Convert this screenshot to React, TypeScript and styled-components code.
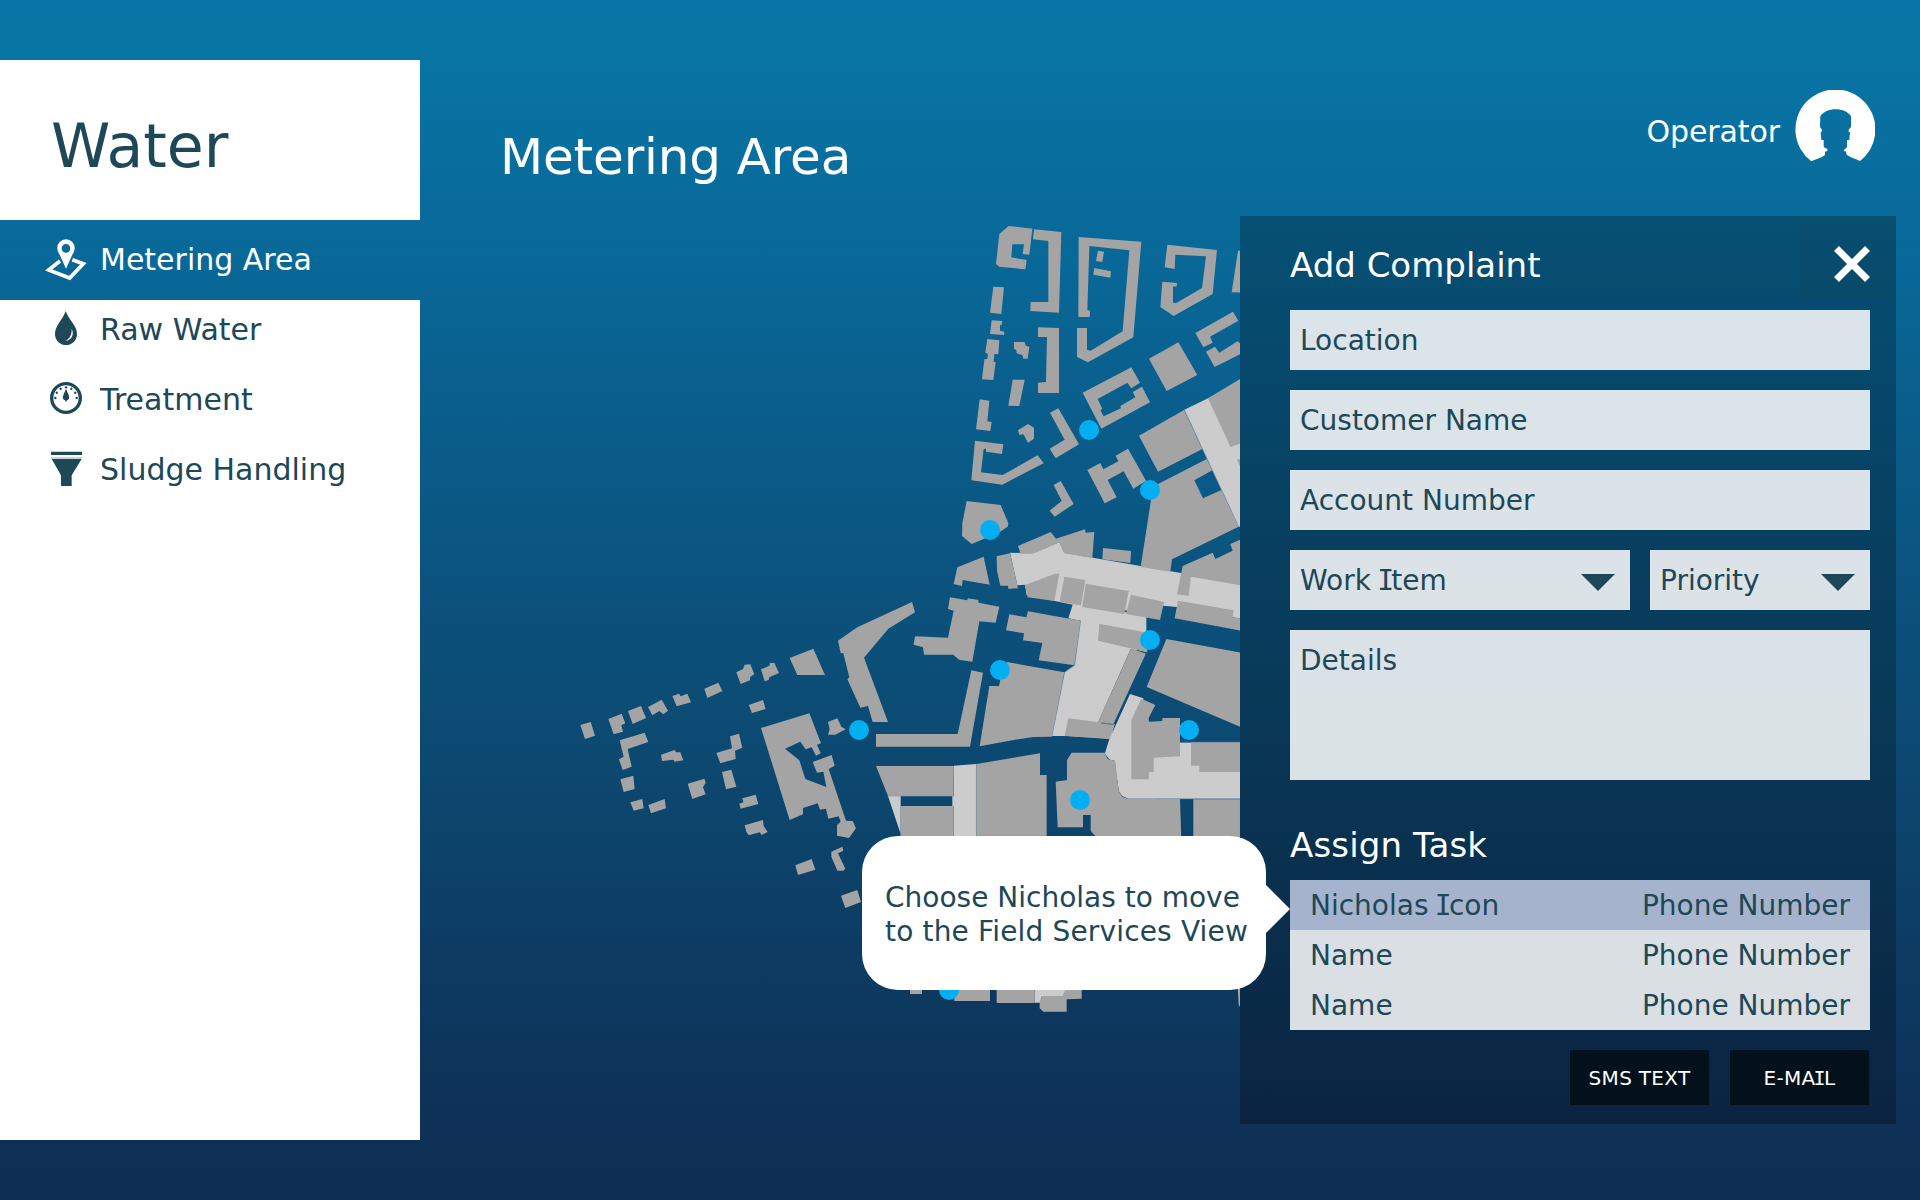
import React from "react";
import styled, { createGlobalStyle, css } from "styled-components";

const ink = "#1e4757";

const GlobalStyle = createGlobalStyle`
  * { box-sizing: border-box; }
  body { margin: 0; font-family: Verdana, "DejaVu Sans", sans-serif; }
  h1, h2, ul, p { margin: 0; padding: 0; font-weight: 400; }
`;

const Screen = styled.div`
  position: relative;
  display: flex;
  width: 1920px;
  height: 1200px;
  padding: 60px 0;
  overflow: hidden;
  color: #fff;
  background: linear-gradient(180deg, #0874a5 0, #0874a4 60px, #086a9a 230px, #0b5581 545px, #0c4870 770px, #0e3157 1110px, #0e2f53 1200px);
`;

const Sidebar = styled.aside`
  display: flex;
  flex-direction: column;
  width: 420px;
  height: 1080px;
  color: ${ink};
`;

const Brand = styled.div`
  display: flex;
  align-items: center;
  height: 160px;
  padding: 12px 0 0 51px;
  background: #fff;
  font-size: 60px;
`;

const NavItem = styled.div<{ $active?: boolean }>`
  display: flex;
  align-items: center;
  gap: 9px;
  height: 60px;
  padding-left: 41px;
  font-size: 30px;
  white-space: nowrap;
  ${(p) => p.$active && css`height: 80px; color: #fff;`}
`;

const NavLabel = styled.span`
  padding-bottom: 2px;
`;

const NavList = styled.nav`
  display: flex;
  flex: 1;
  flex-direction: column;
  gap: 10px;
  background: #fff;
`;

const NavIcon = styled.svg`
  width: 50px;
  height: 50px;
  flex: none;
`;

const Main = styled.main`
  display: flex;
  flex-direction: column;
  width: 1500px;
`;

const Header = styled.header`
  display: flex;
  justify-content: space-between;
  align-items: flex-start;
  height: 156px;
  padding: 30px 45px 0 80px;
`;

const Title = styled.h1`
  padding-top: 37px;
  font-size: 50px;
  line-height: 60px;
  letter-spacing: -0.15px;
`;

const User = styled.div`
  display: flex;
  align-items: center;
  gap: 15px;
  font-size: 30px;
`;

const UserName = styled.span`
  padding-top: 2px;
  letter-spacing: -0.1px;
`;

const Avatar = styled.svg`
  width: 80px;
  height: 80px;
`;

const Content = styled.div`
  display: flex;
  height: 908px;
`;

const MapCanvas = styled.svg`
  display: block;
  width: 820px;
  height: 908px;
  flex: none;
`;

const Panel = styled.section`
  display: flex;
  flex-direction: column;
  width: 656px;
  height: 908px;
  padding: 4px 0 0 50px;
  background: rgba(0, 0, 0, 0.25);
`;

const PanelHead = styled.div`
  display: flex;
  justify-content: space-between;
  align-items: center;
  height: 80px;
  margin-bottom: 10px;
`;

const PanelTitle = styled.h2`
  font-size: 34px;
  line-height: 44px;
  padding-top: 10px;
`;

const Close = styled.div`
  display: flex;
  justify-content: center;
  align-items: center;
  width: 96px;
  height: 80px;
  padding: 7px 0 0 8px;
  background: rgba(50, 50, 30, 0.06);
`;

const Form = styled.div`
  display: flex;
  flex-direction: column;
  gap: 20px;
  width: 580px;
`;

const FieldRow = styled.div`
  display: grid;
  grid-template-columns: 340px 220px;
  gap: 20px;
`;

const Field = styled.div<{ $tall?: boolean }>`
  display: flex;
  justify-content: space-between;
  align-items: flex-start;
  height: ${(p) => (p.$tall ? 150 : 60)}px;
  padding: 0 15px 0 10px;
  color: ${ink};
  background: rgba(255, 255, 255, 0.855);
  font-size: 28px;
  line-height: 62px;
`;

const Arrow = styled.span`
  margin-top: 24px;
  border: 17px solid transparent;
  border-top-color: ${ink};
  border-bottom-width: 0;
`;

const AssignTitle = styled.h2`
  margin: 43px 0 13px;
  font-size: 34px;
  line-height: 44px;
  letter-spacing: 0.15px;
`;

const Person = styled.div<{ $selected?: boolean }>`
  display: flex;
  justify-content: space-between;
  width: 580px;
  height: 50px;
  padding: 0 20px;
  color: ${ink};
  background: ${(p) => (p.$selected ? "#a5b4cc" : "#dadfe3")};
  font-size: 28px;
  line-height: 52px;
`;

const Actions = styled.div`
  display: flex;
  justify-content: flex-end;
  gap: 21px;
  width: 580px;
  margin-top: 20px;
  padding-right: 1px;
`;

const Action = styled.div`
  width: 139px;
  height: 55px;
  background: #03111d;
  font-size: 20px;
  line-height: 56px;
  letter-spacing: 0.3px;
  text-align: center;
`;

/* Capital I with bars, to tell it apart from a lowercase l. */
const BarI = styled.span`
  margin: 0 -0.095em;
  font-family: "DejaVu Sans Mono", monospace;
  line-height: 1;
`;

const Hint = styled.div`
  position: absolute;
  left: 861.5px;
  top: 836px;
  width: 404px;
  height: 153.5px;
  padding: 45px 0 0 23.5px;
  border-radius: 36px;
  background: #fff;
  color: ${ink};
  font-size: 28px;
  line-height: 34px;
  white-space: nowrap;

  &::after {
    content: "";
    position: absolute;
    left: 100%;
    top: 48px;
    margin-left: -1px;
    border: 25px solid transparent;
    border-left-color: #fff;
    border-right-width: 0;
  }
`;

const HintLine = styled.p<{ $spacing: number }>`
  letter-spacing: ${(p) => p.$spacing}px;
`;

type District = { at: [number, number]; shapes: string[] };

const streets: District[] = [
  { at: [1100, 340], shapes: ["253,209 324,175 420,130 420,560 416,560"] },
  {
    at: [930, 480],
    shapes: [
      "240,218 310,220 388,186 403,218 752,279 932,310 932,416 740,381 700,377 690,400 455,380 372,362 290,345 285,314 262,316",
      "428,374 649,405 649,515 602,508 505,725 553,735 542,776 415,768 366,768 404,577 434,556 452,422 415,415",
      "600,642 640,655 640,900 562,900 555,842 540,838 525,820 537,780",
    ],
  },
  {
    at: [840, 720],
    shapes: ["793,98 940,98 1020,68 1200,68 1200,236 865,236 846,228 836,212 825,122 808,118", "584,800 720,800 670,830 605,830 600,848 584,848"],
  },
  { at: [820, 560], shapes: ["401,617 469,612 469,840 401,840", "397,708 402,708 402,738 397,738", "204,708 242,708 242,840 248,840"] },
];

const blocks: District[] = [
  {
    at: [940, 210],
    shapes: [
      "206,48 277,56 268,134 248,132 252,103 217,103 214,142 260,150 256,178 178,170 168,162 178,72",
      "282,58 364,66 357,308 271,303 272,276 325,276 325,93 279,88",
      "160,230 192,232 184,312 150,308",
      "155,331 187,333 185,345 180,346 180,362 193,365 192,375 150,372",
      "142,387 178,391 175,433 163,432 161,455 167,457 160,510 126,508 133,448 142,446 144,432 136,428",
      "222,396 254,396 257,407 268,410 263,446 250,446 248,436 230,430 229,420 222,416",
      "218,509 254,509 238,588 205,587",
      "294,352 357,354 357,549 294,549 294,518 318,516 321,381 294,381",
      "119,568 148,572 142,634 155,636 151,663 108,658",
      "264,642 282,653 282,686 264,698 250,673 238,675 234,661",
      "105,692 190,703 186,732 138,725 138,716 131,716 123,787 188,795 293,736 311,760 187,824 94,811",
      "416,81 604,95 580,382 444,457 411,441 411,354 441,354 441,419 452,422 548,364 568,121 448,108 442,300 450,302 449,321 415,321",
      "474,122 492,125 487,156 468,153",
      "463,174 513,184 511,203 460,194",
      "682,104 831,120 818,252 701,318 661,291 667,215 711,219 710,229 699,230 699,278 709,279 786,234 798,139 706,134 704,177 674,172",
      "894,122 905,122 905,248 875,247",
      "879,305 895,332 810,380 818,398 790,412 766,369",
      "627,446 715,397 772,495 680,543",
      "798,425 825,410 838,428 892,394 905,403 905,430 824,471",
      "428,548 574,472 600,518 574,535 562,518 473,567 487,597 481,601 491,619 543,595 541,588 586,562 578,546 606,530 630,577 484,656",
      "330,608 355,595 417,703 347,745 329,716 374,689",
      "442,780 481,759 490,778 535,754 527,737 564,716 618,812 580,836 551,784 503,810 530,862 494,880",
    ],
  },
  {
    at: [1100, 340],
    shapes: [
      "324,175 422,116 422,310 392,322",
      "411,360 422,356 422,384",
      "117,287 252,210 307,327 174,395",
      "170,434 320,357 337,391 283,421 309,475 364,450 416,560 216,658 211,695 122,681 153,480",
      "248,678 338,638 346,657 398,632 391,612 422,598 422,736 273,710 266,768 231,763",
      "9,624 93,633 91,669 7,658",
    ],
  },
  {
    at: [930, 480],
    shapes: [
      "371,15 392,3 431,72 374,110 359,92 395,63",
      "110,63 212,75 235,130 233,140 205,158 125,192 96,168 97,130",
      "161,230 179,314 98,300 96,318 71,312 82,262",
      "200,229 240,220 264,325 235,326 234,317 211,317 201,272",
      "264,198 362,156 378,176 465,148 467,158 493,156 487,234 403,220 388,187 315,219 272,222",
      "285,315 375,281 388,281 373,363 293,352",
      "403,290 466,300 453,376 389,366",
      "467,311 596,333 583,402 457,381",
      "603,344 702,366 690,420 588,402",
      "744,362 911,391 908,412 932,416 932,452 734,415",
      "508,431 640,456 652,470 652,517 504,482",
      "603,506 648,520 550,733 505,725",
      "415,715 555,733 538,777 404,768",
      "709,477 932,518 932,741 650,621",
      "634,656 676,675 656,714 657,725 697,723 697,714 750,714 750,829 671,833 671,876 657,876 657,898 604,898 604,720",
      "783,787 932,787 932,876 808,876 808,857 783,857",
    ],
  },
  {
    at: [820, 560],
    shapes: [
      "276,126 285,157 205,206 132,293 204,486 158,486 144,438 121,443 82,358 88,352 70,280 62,279 54,242 112,202",
      "24,486 29,484 52,475 64,500 77,508 46,524 24,524 29,508",
      "390,112 442,121 443,115 475,120 476,128 538,140 527,188 478,184 457,305 417,299 400,284 312,284 309,262 281,254 285,229 384,233 401,152 384,147",
      "568,163 619,172 624,154 782,182 763,316 656,301 667,249 609,241 612,220 558,211",
      "560,306 733,337 696,530 640,531 600,537 479,559 508,378 537,378 545,340",
      "454,331 489,338 450,560 168,560 168,522 413,522",
      "168,618 401,618 400,708 204,708",
      "242,738 401,738 401,840 242,840",
      "469,612 660,580 660,645 680,645 680,840 469,840",
    ],
  },
  {
    at: [840, 720],
    shapes: [
      "695,98 793,98 804,118 825,122 836,212 846,230 865,237 1020,237 1024,360 780,360 768,350 752,333 752,285 729,285 729,322 653,322 647,185 681,180 681,120",
      "1060,238 1200,238 1200,360 1060,360",
      "210,800 246,800 246,822 210,822",
      "343,800 450,800 450,843 343,843",
      "470,800 584,800 584,849 470,849",
      "690,805 725,805 725,836 680,838 680,875 610,875 599,865 599,842 608,828 668,828 674,814",
      "1193,800 1200,800 1200,860 1196,855",
      "3,527 52,510 63,546 16,564",
    ],
  },
  {
    at: [570, 580],
    shapes: [
      "31,435 62,426 75,467 45,477",
      "115,417 155,401 166,430 154,436 159,455 131,463",
      "174,393 213,378 228,414 188,432",
      "234,381 275,359 294,392 280,403 268,393 247,406",
      "307,348 327,341 332,349 352,341 363,367 320,379",
      "403,326 445,308 457,333 412,354",
      "499,277 519,267 524,254 541,253 553,283 541,290 540,301 512,312",
      "573,268 598,257 600,249 613,249 627,279 598,292 596,300 584,304",
      "659,234 730,206 765,285 682,285",
      "536,375 579,360 587,387 546,399",
      "149,481 224,458 235,486 173,507 185,560 158,570 147,538 161,530",
      "273,524 314,510 318,517 331,517 340,541 313,545 311,539 276,543",
      "151,598 190,587 194,627 161,636",
      "181,667 217,657 221,685 191,692",
      "235,675 284,657 288,685 243,700",
      "353,611 403,596 407,608 399,622 407,643 367,657",
      "480,469 507,461 517,503 495,512 497,537 451,550 439,519 486,505",
      "456,576 484,569 499,620 468,628",
      "517,655 557,644 565,672 512,686 508,671 520,667",
      "524,736 579,720 581,738 593,756 574,765 570,757 536,766 529,755",
      "573,444 718,400 753,490 741,494 752,520 738,527 725,502 707,508 691,485 645,506 688,541 706,597 769,621 760,575 741,578 728,546 785,525 794,557 776,567 828,722 848,723 858,745 837,774 801,767 801,735 812,725 806,709 775,716 768,686 750,689 743,670 699,684 699,703 659,720",
      "676,856 725,837 736,869 684,885",
      "784,815 817,800 820,812 804,820 826,866 820,872 802,872 784,830",
    ],
  },
];

const meters = [[1089, 430], [1150, 490], [990, 530], [1150, 640], [1000, 670], [859, 730], [1189, 730], [1080, 800], [949, 990]];

const Districts = ({ list, fill }: { list: District[]; fill: string }) => (
  <g fill={fill}>
    {list.map((d, i) => (
      <g key={i} transform={`translate(${d.at[0]} ${d.at[1]}) scale(0.33333)`}>
        {d.shapes.map((s) => <polygon key={s} points={s} />)}
      </g>
    ))}
  </g>
);

const CityMap = () => (
  <MapCanvas viewBox="420 216 820 908">
    <Districts list={streets} fill="#cccccc" />
    <Districts list={blocks} fill="#a4a4a4" />
    <g fill="none" stroke="#7f9bad" strokeWidth="0.6">
      <path d="M1184.3 409.7L1238.8 526.7M1080.7 620.7L1074.7 665.3L1064.7 672.3L1052 736M976.4 764.5V836M1180 742.3H1240M1155 798.8H1240M888 796H954M976 835.5H1046" />
      <path d="M1101 723L1113.5 724.6M1137 650L1146 653.5" stroke="#1d587d" />
    </g>
    <g fill="#03aff2">
      {meters.map(([x, y]) => <circle key={`${x}-${y}`} cx={x} cy={y} r="10" />)}
    </g>
  </MapCanvas>
);

const ticks = [-90, -60, -30, 0, 30, 60, 90];

export default function App() {
  return (
    <>
      <GlobalStyle />
      <Screen>
        <Sidebar>
          <Brand>Water</Brand>
          <NavItem $active>
            <NavIcon viewBox="123 585 150 150" fill="none">
              <path d="M180 663L146 690L209 714L250 671L217 659" stroke="#fff" strokeWidth="11" />
              <path fillRule="evenodd" fill="#fff" d="M198 686L179 644C174 637 172 631 172 624A26 26 0 0 1 224 624C224 631 222 637 217 644ZM198 612A13 13 0 1 0 198 638A13 13 0 1 0 198 612Z" />
            </NavIcon>
            <NavLabel>Metering Area</NavLabel>
          </NavItem>
          <NavList>
            <NavItem>
              <NavIcon viewBox="123 795 150 150">
                <path fill={ink} d="M197 813C205 838 231 856 231 883A33 32 0 0 1 165 883C165 856 189 838 197 813Z" />
                <path fill="#fff" d="M215 866C223 882 217 900 195 903C209 896 216 884 215 866Z" />
              </NavIcon>
              <NavLabel>Raw Water</NavLabel>
            </NavItem>
            <NavItem>
              <NavIcon viewBox="123 1005 150 150">
                <circle cx="198" cy="1074" r="43" fill="none" stroke={ink} strokeWidth="10" />
                {ticks.map((a) => (
                  <circle key={a} cx="198" cy="1042" r="3.6" fill={ink} transform={`rotate(${a} 198 1074)`} />
                ))}
                <path fill={ink} d="M198 1046L207 1068C209 1074 206 1080 201 1081L198 1086L195 1081C190 1080 187 1074 189 1068Z" />
              </NavIcon>
              <NavLabel>Treatment</NavLabel>
            </NavItem>
            <NavItem>
              <NavIcon viewBox="123 1215 150 150" fill={ink}>
                <path d="M153 1235.5H246V1245H153ZM155 1257H245L215 1306V1338H183V1306Z" />
                <path opacity=".35" d="M153 1252H246V1256H153Z" />
              </NavIcon>
              <NavLabel>Sludge Handling</NavLabel>
            </NavItem>
          </NavList>
        </Sidebar>
        <Main>
          <Header>
            <Title>Metering Area</Title>
            <User>
              <UserName>Operator</UserName>
              <Avatar viewBox="46 60 240 240" fill="#fff">
                <path d="M95 274A120 120 0 1 1 241 273C228 266 214 263 201 254L199 244H193V239C199 236 202 233 202 229V210H209L211 187L207 185V179L214 171V139C205 125 188 118 168 118S131 125 122 139L121 171L127 179V185H123L125 210H132V229C134 233 139 236 143 236V243L136 245V255C124 264 109 267 95 274Z" />
              </Avatar>
            </User>
          </Header>
          <Content>
            <CityMap />
            <Panel>
              <PanelHead>
                <PanelTitle>Add Complaint</PanelTitle>
                <Close>
                  <svg width="36" height="36" viewBox="0 0 36 36" stroke="#fff" strokeWidth="7">
                    <path d="M2.5 2.5L33.5 33.5M33.5 2.5L2.5 33.5" />
                  </svg>
                </Close>
              </PanelHead>
              <Form>
                <Field>Location</Field>
                <Field>Customer Name</Field>
                <Field>Account Number</Field>
                <FieldRow>
                  <Field><span>Work <BarI>I</BarI>tem</span><Arrow /></Field>
                  <Field>Priority<Arrow /></Field>
                </FieldRow>
                <Field $tall>Details</Field>
              </Form>
              <AssignTitle>Assign Task</AssignTitle>
              <Person $selected><span>Nicholas <BarI>I</BarI>con</span><span>Phone Number</span></Person>
              <Person><span>Name</span><span>Phone Number</span></Person>
              <Person><span>Name</span><span>Phone Number</span></Person>
              <Actions>
                <Action>SMS TEXT</Action>
                <Action>E-MA<BarI>I</BarI>L</Action>
              </Actions>
            </Panel>
          </Content>
        </Main>
        <Hint>
          <HintLine $spacing={0}>Choose Nicholas to move</HintLine>
          <HintLine $spacing={0.16}>to the Field Services View</HintLine>
        </Hint>
      </Screen>
    </>
  );
}
